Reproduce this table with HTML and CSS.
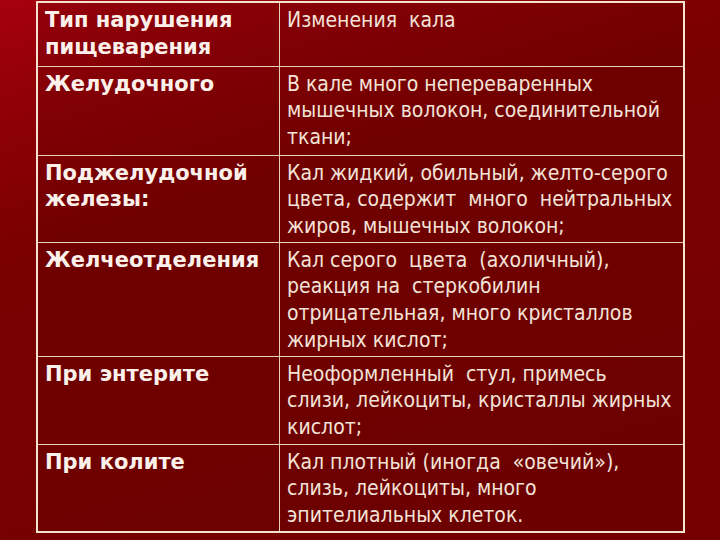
FILE: index.html
```html
<!DOCTYPE html>
<html lang="ru">
<head>
<meta charset="utf-8">
<link rel="stylesheet" href="styles.css">
</head>
<body>
<div class="slide">
  <table class="grid">
    <tr class="r-head">
      <td class="c-type c-head">Тип нарушения<br>пищеварения</td>
      <td class="c-desc">Изменения&nbsp; кала</td>
    </tr>
    <tr class="r1">
      <td class="c-type">Желудочного</td>
      <td class="c-desc">В кале много непереваренных<br>мышечных волокон, соединительной<br>ткани;</td>
    </tr>
    <tr class="r2">
      <td class="c-type">Поджелудочной<br>железы:</td>
      <td class="c-desc">Кал жидкий, обильный, желто-серого<br>цвета, содержит&nbsp; много&nbsp; нейтральных<br>жиров, мышечных волокон;</td>
    </tr>
    <tr class="r3">
      <td class="c-type">Желчеотделения</td>
      <td class="c-desc">Кал серого&nbsp; цвета&nbsp; (ахоличный),<br>реакция на&nbsp; стеркобилин<br>отрицательная, много кристаллов<br>жирных кислот;</td>
    </tr>
    <tr class="r4">
      <td class="c-type">При энтерите</td>
      <td class="c-desc">Неоформленный&nbsp; стул, примесь<br>слизи, лейкоциты, кристаллы жирных<br>кислот;</td>
    </tr>
    <tr class="r5">
      <td class="c-type">При колите</td>
      <td class="c-desc">Кал плотный (иногда&nbsp; «овечий»),<br>слизь, лейкоциты, много<br>эпителиальных клеток.</td>
    </tr>
  </table>
</div>
</body>
</html>
```

FILE: styles.css
```css
html, body {
  margin: 0;
  padding: 0;
}
body {
  width: 720px;
  height: 540px;
  overflow: hidden;
  background: #7a0000;
}
.slide {
  width: 720px;
  height: 540px;
  padding: 1px 0 0 36px;
  box-sizing: border-box;
  background:
    linear-gradient(163deg, #a6000e 0%, #8e0006 16%, #7a0000 34%, #740000 100%);
  font-family: "DejaVu Sans Condensed", "DejaVu Sans", sans-serif;
  color: #f3e3d8;
}
.grid {
  border-collapse: collapse;
  width: 649px;
  table-layout: fixed;
  border: 2px solid #f3e3cf;
}
.grid td {
  border: 1px solid #e8cfb9;
  vertical-align: top;
  font-size: 21px;
  line-height: 26.7px;
  padding: 4px 2px 0 7px;
  white-space: nowrap;
  background: rgba(60, 0, 0, 0.14);
}
.c-type {
  width: 232px;
  font-family: "DejaVu Sans", sans-serif;
  font-weight: bold;
  color: #fbf1ea;
}
.c-head {
  line-height: 28.5px;
}
.c-desc {
  padding-left: 8px;
}
.r-head { height: 64px; }
.r1 { height: 89px; }
.r2 { height: 87px; }
.r3 { height: 114px; }
.r4 { height: 88px; }
.r5 { height: 88px; }
```
